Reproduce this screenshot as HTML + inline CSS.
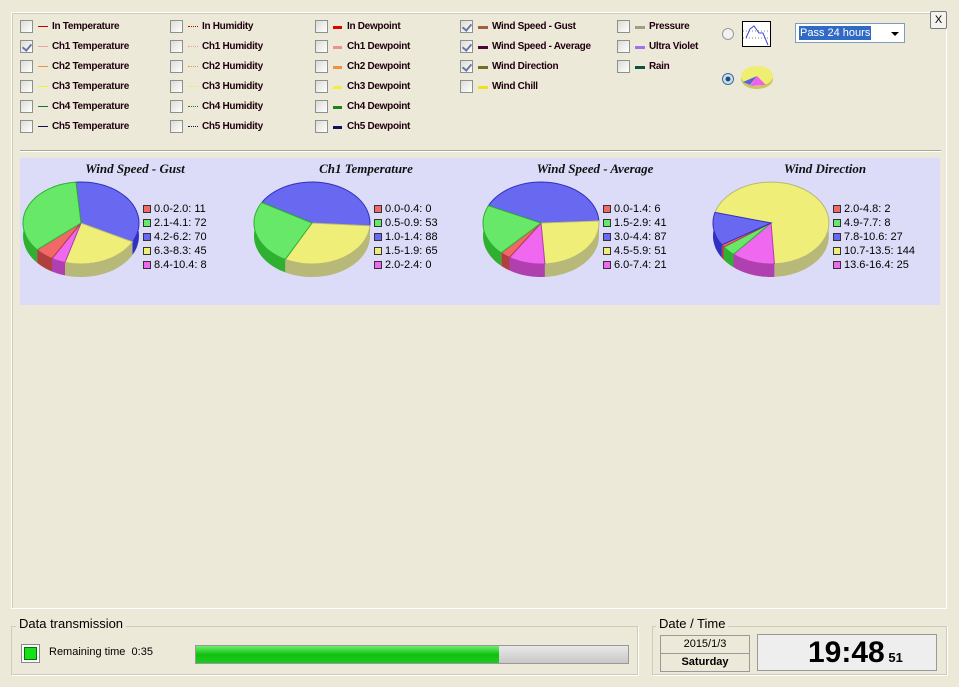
<!DOCTYPE html>
<html><head><meta charset="utf-8"><style>
*{box-sizing:border-box}
body{margin:0;width:959px;height:687px;background:#ece9d8;font-family:"Liberation Sans",sans-serif;position:relative;overflow:hidden}
.abs{position:absolute}
.main{left:11px;top:12px;width:936px;height:597px;border:1px solid #fff;border-right-color:#fff;box-shadow:inset 1px 1px 0 #d0ccb8}
.cb{position:absolute;width:13px;height:13px;border:1px solid #8e8f8f;background:linear-gradient(135deg,#dcdcd4,#fff)}
.cb.on::after{content:"";position:absolute;left:3px;top:1px;width:4px;height:7px;border:solid #6a78a8;border-width:0 2px 2px 0;transform:rotate(40deg)}
.it{position:absolute;font-size:10px;font-weight:bold;color:#200010;letter-spacing:-0.3px;white-space:nowrap}
.ln{position:absolute;height:0;width:10px}
.leg{position:absolute;font-size:11px;color:#000;white-space:nowrap}
.sw{display:inline-block;width:8px;height:8px;border:1px solid #333;margin-right:3px;vertical-align:-1px}
.ttl{position:absolute;font-family:"Liberation Serif",serif;font-style:italic;font-weight:bold;font-size:13px;color:#111;text-align:center;width:200px}
.grp{border:1px solid #d0ccb8;box-shadow:1px 1px 0 #fff}
</style></head><body>
<div class="abs main"></div>
<div class="abs" style="left:930px;top:11px;width:17px;height:18px;border:1px solid #7a7a7a;border-radius:2px;background:#f4f3ee;font-size:11px;text-align:center;line-height:16px">X</div>
<div class="abs" style="left:20px;top:150px;width:921px;height:1px;background:#aca899;box-shadow:0 1px 0 #fff"></div>
<div class="abs" style="left:20px;top:158px;width:920px;height:147px;background:#dcdcf8"></div>
<div id="cbs"></div>
<svg class="abs" style="left:0;top:0" width="959" height="687" id="sv"></svg>
<div class="abs" style="left:722px;top:28px;width:12px;height:12px;border-radius:50%;border:1px solid #9a9a9a;background:#f2f2f2"></div>
<div class="abs" style="left:722px;top:73px;width:12px;height:12px;border-radius:50%;border:1px solid #3a6aa0;background:radial-gradient(circle,#1c4f7c 30%,#d0e0ee 40%)"></div>
<div class="abs" style="left:742px;top:21px;width:29px;height:26px;background:#fff;border:1px solid #000"></div>
<svg class="abs" style="left:742px;top:21px" width="30" height="27"><path d="M1 10H28M1 17H28" stroke="#888" stroke-dasharray="1 2"/><path d="M4 17 L8 8 L12 5 L17 12 L21 12 L26 24" fill="none" stroke="#4444dd" stroke-width="1"/></svg>
<svg class="abs" style="left:740px;top:64px" width="36" height="28"><ellipse cx="17" cy="15" rx="16" ry="10" fill="#c8c860"/><ellipse cx="17" cy="12" rx="16" ry="10" fill="#eeee70"/><path d="M17 12 L3 18 L10 21 Z" fill="#6060e0"/><path d="M17 12 L10 22 L26 21 Z" fill="#f060f0"/></svg>
<div class="abs" style="left:795px;top:23px;width:110px;height:20px;background:#fff;border:1px solid #7f9db9"><span style="position:absolute;left:3px;top:2px;background:#316ac5;color:#fff;font-size:11px;padding:1px 1px">Pass 24 hours</span><span style="position:absolute;right:5px;top:8px;border:4px solid transparent;border-top:4px solid #000"></span></div>
<div class="abs grp" style="left:11px;top:626px;width:627px;height:49px"></div>
<div class="abs" style="left:16px;top:616px;background:#ece9d8;padding:0 3px;font-size:13px">Data transmission</div>
<div class="abs" style="left:21px;top:644px;width:19px;height:19px;border:1px solid #888;background:#fff;padding:2px"><div style="width:13px;height:13px;background:#18e018;border:1px solid #070"></div></div>
<div class="abs" style="left:49px;top:646px;font-size:11px">Remaining time &nbsp;0:35</div>
<div class="abs" style="left:195px;top:645px;width:434px;height:19px;border:1px solid #999;background:linear-gradient(#e8e8e8,#c8c8c8)"></div>
<div class="abs" style="left:196px;top:646px;width:303px;height:17px;background:linear-gradient(#70ee70,#10c010 50%,#20c820)"></div>
<div class="abs grp" style="left:652px;top:626px;width:295px;height:49px"></div>
<div class="abs" style="left:656px;top:616px;background:#ece9d8;padding:0 3px;font-size:13px">Date / Time</div>
<div class="abs" style="left:660px;top:635px;width:90px;height:19px;border:1px solid #999;background:#ece9d8;font-size:11px;text-align:center;line-height:17px">2015/1/3</div>
<div class="abs" style="left:660px;top:653px;width:90px;height:19px;border:1px solid #999;background:#ece9d8;font-size:11px;font-weight:bold;text-align:center;line-height:17px">Saturday</div>
<div class="abs" style="left:757px;top:634px;width:180px;height:37px;border:1px solid #999;background:#eeeeee"></div>
<div class="abs" style="left:808px;top:634px;font-size:30px;font-weight:bold;line-height:37px">19:48<span style="font-size:13px"> 51</span></div>
<div id="legs"></div>
<script>
var items=[
[20,["In Temperature","#c00000","s",0],["Ch1 Temperature","#f0a0a0","s",1],["Ch2 Temperature","#f09040","s",0],["Ch3 Temperature","#f0f040","s",0],["Ch4 Temperature","#207020","s",0],["Ch5 Temperature","#101050","s",0]],
[170,["In Humidity","#c00000","d",0],["Ch1 Humidity","#f0a0a0","d",0],["Ch2 Humidity","#f09040","d",0],["Ch3 Humidity","#f0f040","d",0],["Ch4 Humidity","#207020","d",0],["Ch5 Humidity","#101050","d",0]],
[315,["In Dewpoint","#e00000","b",0],["Ch1 Dewpoint","#f09090","b",0],["Ch2 Dewpoint","#f09040","b",0],["Ch3 Dewpoint","#f0f040","b",0],["Ch4 Dewpoint","#208020","b",0],["Ch5 Dewpoint","#101060","b",0]],
[460,["Wind Speed - Gust","#a06040","t",1],["Wind Speed - Average","#500040","t",1],["Wind Direction","#707020","t",1],["Wind Chill","#f0e020","t",0]],
[617,["Pressure","#a0a080","t",0],["Ultra Violet","#a070f0","t",0],["Rain","#105040","t",0]]];
var h="";
items.forEach(function(c){var x=c[0];for(var i=1;i<c.length;i++){var y=20+(i-1)*20,it=c[i];
h+='<div class="cb'+(it[3]?' on':'')+'" style="left:'+x+'px;top:'+y+'px"></div>';
var st=it[2]=="s"?"border-top:1px solid "+it[1]:it[2]=="d"?"border-top:1px dotted "+it[1]:it[2]=="b"?"border-top:3px dashed "+it[1]+";width:9px":"border-top:3px solid "+it[1];
h+='<div class="ln" style="left:'+(x+18)+'px;top:'+(y+6)+'px;'+st+'"></div>';
h+='<div class="it" style="left:'+(x+32)+'px;top:'+(y+1)+'px">'+it[0]+'</div>';}});
document.getElementById("cbs").innerHTML=h;
var C={r:"#f06868",g:"#68e868",b:"#6868f0",y:"#eeee78",m:"#f068f0"},D={r:"#b04040",g:"#30b030",b:"#3030c0",y:"#b8b878",m:"#b040b0"};
var pies=[
{cx:81,t:"Wind Speed - Gust",s:-95,sl:[["b",70],["y",45],["m",8],["r",11],["g",72]],L:[["r","0.0-2.0: 11"],["g","2.1-4.1: 72"],["b","4.2-6.2: 70"],["y","6.3-8.3: 45"],["m","8.4-10.4: 8"]]},
{cx:312,t:"Ch1 Temperature",s:-150,sl:[["b",88],["y",65],["g",53]],L:[["r","0.0-0.4: 0"],["g","0.5-0.9: 53"],["b","1.0-1.4: 88"],["y","1.5-1.9: 65"],["m","2.0-2.4: 0"]]},
{cx:541,t:"Wind Speed - Average",s:-155,sl:[["b",87],["y",51],["m",21],["r",6],["g",41]],L:[["r","0.0-1.4: 6"],["g","1.5-2.9: 41"],["b","3.0-4.4: 87"],["y","4.5-5.9: 51"],["m","6.0-7.4: 21"]]},
{cx:771,t:"Wind Direction",s:-165,sl:[["y",144],["m",25],["g",8],["r",2],["b",27]],L:[["r","2.0-4.8: 2"],["g","4.9-7.7: 8"],["b","7.8-10.6: 27"],["y","10.7-13.5: 144"],["m","13.6-16.4: 25"]]}];
var s="",lg="";
pies.forEach(function(p){var cx=p.cx,cy=223,rx=58,ry=41,d=13;
var tot=p.sl.reduce(function(a,b){return a+b[1]},0),a=p.s*Math.PI/180;
var segs=[];p.sl.forEach(function(q){var a2=a+q[1]/tot*2*Math.PI;segs.push([q[0],a,a2]);a=a2;});
segs.forEach(function(g){var pts=[];for(var k=0;k<=30;k++){var t=g[1]+(g[2]-g[1])*k/30;pts.push([cx+rx*Math.cos(t),cy+ry*Math.sin(t)]);}
var side="M"+pts.map(function(q){return q[0].toFixed(1)+" "+q[1].toFixed(1)}).join(" L")+" L"+pts.slice().reverse().map(function(q){return q[0].toFixed(1)+" "+(q[1]+d).toFixed(1)}).join(" L")+"Z";
s+='<path d="'+side+'" fill="'+D[g[0]]+'"/>';});
segs.forEach(function(g){var pts=[];for(var k=0;k<=30;k++){var t=g[1]+(g[2]-g[1])*k/30;pts.push((cx+rx*Math.cos(t)).toFixed(1)+" "+(cy+ry*Math.sin(t)).toFixed(1));}
s+='<path d="M'+cx+' '+cy+' L'+pts.join(" L")+'Z" fill="'+C[g[0]]+'" stroke="'+D[g[0]]+'" stroke-width="1"/>';});
lg+='<div class="ttl" style="left:'+(cx-100+54)+'px;top:161px">'+p.t+'</div>';
p.L.forEach(function(l,i){lg+='<div class="leg" style="left:'+(cx+62)+'px;top:'+(203+i*14)+'px"><span class="sw" style="background:'+C[l[0]]+'"></span>'+l[1]+'</div>';});});
document.getElementById("sv").innerHTML=s;document.getElementById("legs").innerHTML=lg;
</script>
</body></html>
